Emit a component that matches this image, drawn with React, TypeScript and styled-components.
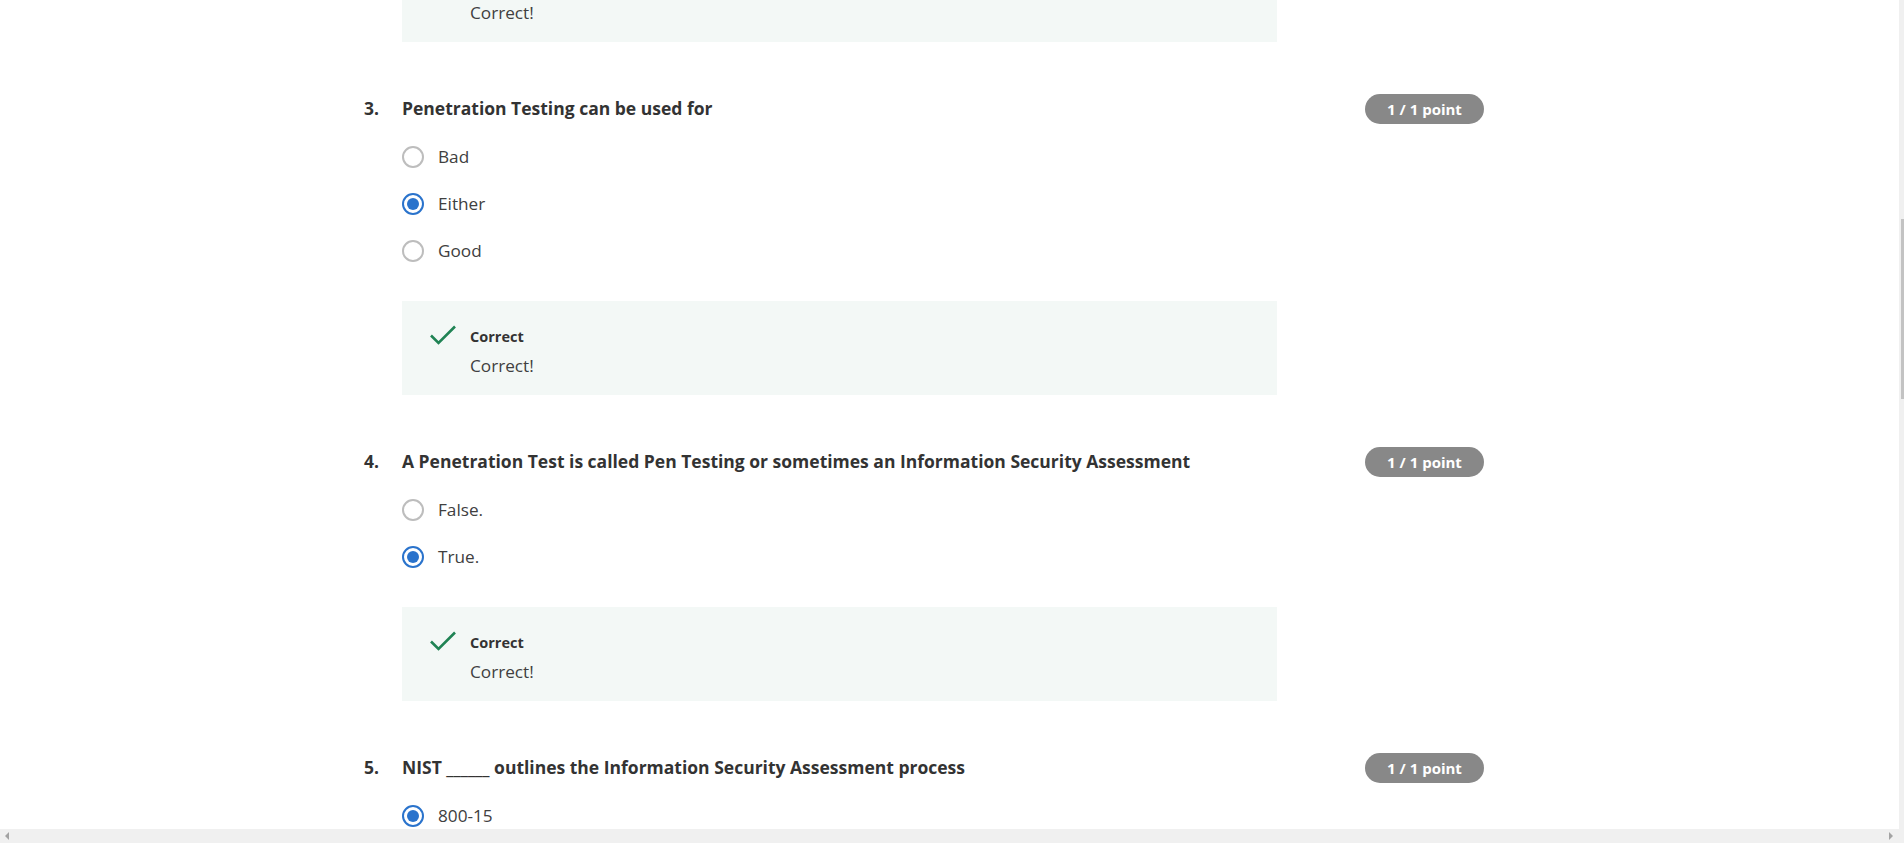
import React from 'react'
import styled, { createGlobalStyle } from 'styled-components'

const GlobalStyle = createGlobalStyle`
  html, body {
    margin: 0;
    padding: 0;
    background: #ffffff;
    font-family: 'Open Sans', 'Liberation Sans', Arial, sans-serif;
    color: #333333;
    overflow: hidden;
  }
`

type Option = { label: string; checked?: boolean }
type Question = { num: number; title: string; options: Option[]; feedback?: boolean }

const questions: Question[] = [
  {
    num: 3,
    title: 'Penetration Testing can be used for',
    options: [{ label: 'Bad' }, { label: 'Either', checked: true }, { label: 'Good' }],
    feedback: true
  },
  {
    num: 4,
    title: 'A Penetration Test is called Pen Testing or sometimes an Information Security Assessment',
    options: [{ label: 'False.' }, { label: 'True.', checked: true }],
    feedback: true
  },
  {
    num: 5,
    title: 'NIST ______ outlines the Information Security Assessment process',
    options: [{ label: '800-15', checked: true }, { label: '800-53' }, { label: '800-115' }]
  }
]

const Frame = styled.div`
  display: flex;
  flex-direction: column;
  height: 100vh;
  width: 100vw;
`

const Viewport = styled.div`
  flex: 1;
  display: flex;
  min-height: 0;
`

const Content = styled.main`
  flex: 1;
  overflow: hidden;
  padding-left: 364px;
`

const Column = styled.div`
  width: 1120px;
  display: flex;
  flex-direction: column;
`

const VTrack = styled.div`
  width: 5px;
  background: #f0f0f0;
  display: flex;
  flex-direction: column;
  align-items: flex-end;
  padding-top: 219px;
`

const VThumb = styled.div`
  width: 3px;
  height: 180px;
  background: #c3c3c3;
`

const HTrack = styled.div`
  height: 14px;
  background: #f0f0f0;
  display: flex;
  align-items: center;
  justify-content: space-between;
  padding: 0 11px 0 5px;
`

const Arrow = styled.span<{ $dir: 'left' | 'right' }>`
  width: 0;
  height: 0;
  border-top: 4px solid transparent;
  border-bottom: 4px solid transparent;
  ${({ $dir }) =>
    $dir === 'left' ? 'border-right: 4px solid #a3a3a3;' : 'border-left: 4px solid #a3a3a3;'}
`

const Block = styled.section`
  margin-top: 52px;
`

const Header = styled.div`
  display: flex;
  align-items: center;
  height: 30px;
`

const Num = styled.span`
  width: 38px;
  flex-shrink: 0;
  font-size: 17.5px;
  font-weight: 700;
  line-height: 24px;
  padding-bottom: 3px;
  color: #333333;
`

const Title = styled.h3`
  flex: 1;
  margin: 0;
  font-size: 17.5px;
  font-weight: 700;
  line-height: 24px;
  padding-bottom: 3px;
  color: #333333;
`

const Badge = styled.span`
  width: 119px;
  height: 30px;
  border-radius: 15px;
  background: #888888;
  color: #ffffff;
  font-size: 15px;
  font-weight: 700;
  display: flex;
  align-items: center;
  justify-content: center;
`

const Body = styled.div`
  margin-left: 38px;
  width: 875px;
`

const Options = styled.div`
  padding-top: 9px;
  display: flex;
  flex-direction: column;
`

const OptionRow = styled.label`
  height: 47px;
  display: flex;
  align-items: center;
  gap: 14px;
  font-size: 17.2px;
  color: #404040;
`

const Radio = styled.span<{ $checked?: boolean }>`
  box-sizing: border-box;
  width: 22px;
  height: 22px;
  border-radius: 50%;
  border: 2px solid ${({ $checked }) => ($checked ? '#2a73cc' : '#bdbdbd')};
  display: flex;
  align-items: center;
  justify-content: center;
  &::after {
    content: '';
    width: 12px;
    height: 12px;
    border-radius: 50%;
    background: ${({ $checked }) => ($checked ? '#2a73cc' : 'transparent')};
  }
`

const Feedback = styled.div<{ $pulled?: boolean }>`
  box-sizing: border-box;
  height: 94px;
  margin-top: ${({ $pulled }) => ($pulled ? '-52px' : '27px')};
  background: #f3f8f6;
  display: flex;
  gap: 13px;
  padding: 26px 24px 12px 27px;
`

const Check = styled.svg`
  width: 28px;
  height: 22px;
  flex-shrink: 0;
  margin-top: -3px;
`

const FeedbackText = styled.div`
  display: flex;
  flex-direction: column;
`

const FeedbackLabel = styled.span`
  font-size: 14.5px;
  font-weight: 700;
  line-height: 20px;
  color: #333333;
`

const FeedbackMsg = styled.span`
  font-size: 17.2px;
  line-height: 26px;
  margin-top: 6px;
  color: #404040;
`

const CorrectBox: React.FC<{ pulled?: boolean }> = ({ pulled }) => (
  <Feedback $pulled={pulled}>
    <Check viewBox="0 0 28 22">
      <path d="M2 11.5 L9.5 19 L26 2.5" fill="none" stroke="#1f8354" strokeWidth="2.6" />
    </Check>
    <FeedbackText>
      <FeedbackLabel>Correct</FeedbackLabel>
      <FeedbackMsg>Correct!</FeedbackMsg>
    </FeedbackText>
  </Feedback>
)

export default function App() {
  return (
    <Frame>
      <GlobalStyle />
      <Viewport>
        <Content>
          <Column>
            <Body>
              <CorrectBox pulled />
            </Body>
            {questions.map((q) => (
              <Block key={q.num}>
                <Header>
                  <Num>{q.num}.</Num>
                  <Title>{q.title}</Title>
                  <Badge>1 / 1 point</Badge>
                </Header>
                <Body>
                  <Options>
                    {q.options.map((o) => (
                      <OptionRow key={o.label}>
                        <Radio $checked={o.checked} />
                        {o.label}
                      </OptionRow>
                    ))}
                  </Options>
                  {q.feedback && <CorrectBox />}
                </Body>
              </Block>
            ))}
          </Column>
        </Content>
        <VTrack>
          <VThumb />
        </VTrack>
      </Viewport>
      <HTrack>
        <Arrow $dir="left" />
        <Arrow $dir="right" />
      </HTrack>
    </Frame>
  )
}
